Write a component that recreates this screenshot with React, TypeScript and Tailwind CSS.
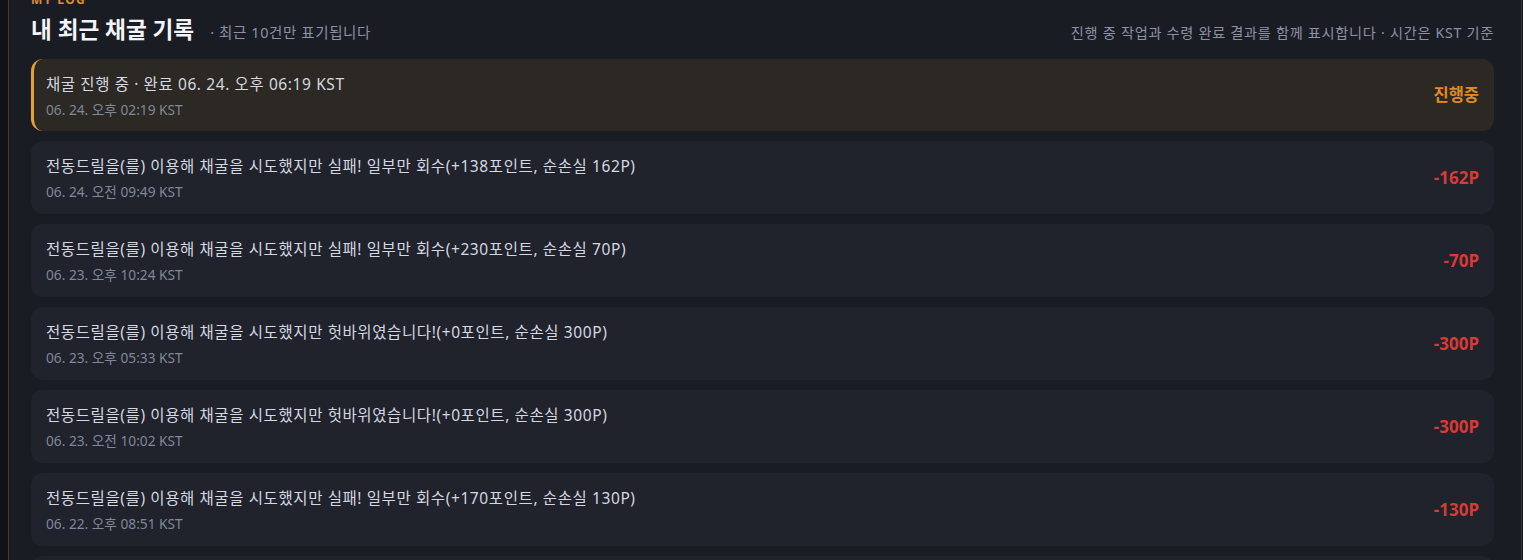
import React from "react"

type Log = {
  text: string
  time: string
  amount: string
  pending?: boolean
}

const logs: Log[] = [
  { text: "채굴 진행 중 · 완료 06. 24. 오후 06:19 KST", time: "06. 24. 오후 02:19 KST", amount: "진행중", pending: true },
  { text: "전동드릴을(를) 이용해 채굴을 시도했지만 실패! 일부만 회수(+138포인트, 순손실 162P)", time: "06. 24. 오전 09:49 KST", amount: "-162P" },
  { text: "전동드릴을(를) 이용해 채굴을 시도했지만 실패! 일부만 회수(+230포인트, 순손실 70P)", time: "06. 23. 오후 10:24 KST", amount: "-70P" },
  { text: "전동드릴을(를) 이용해 채굴을 시도했지만 헛바위였습니다!(+0포인트, 순손실 300P)", time: "06. 23. 오후 05:33 KST", amount: "-300P" },
  { text: "전동드릴을(를) 이용해 채굴을 시도했지만 헛바위였습니다!(+0포인트, 순손실 300P)", time: "06. 23. 오전 10:02 KST", amount: "-300P" },
  { text: "전동드릴을(를) 이용해 채굴을 시도했지만 실패! 일부만 회수(+170포인트, 순손실 130P)", time: "06. 22. 오후 08:51 KST", amount: "-130P" },
  { text: "전동드릴을(를) 이용해 채굴을 시도했지만 헛바위였습니다!(+0포인트, 순손실 300P)", time: "06. 22. 오후 03:12 KST", amount: "-300P" },
]

export default function App() {
  return (
    <div
      className="min-h-screen overflow-hidden bg-[#111217]"
      style={{ fontFamily: '"Noto Sans", "Noto Sans CJK KR", sans-serif' }}
    >
      <div className="ml-[8px] w-[1514px] border-l border-r border-l-[#4a3a24] border-r-[#353842] bg-[#1a1c24] pl-[22px] pr-[27px] pb-6">
        {/* header */}
        <div className="-mt-[8px] text-[12px] font-bold leading-4 tracking-[0.12em] text-[#e08a2a]">MY LOG</div>
        <div className="mt-[8px] flex items-baseline justify-between">
          <div className="flex items-baseline gap-4">
            <h2 className="text-[22.6px] font-bold leading-7 text-[#f2f4f7]">내 최근 채굴 기록</h2>
            <span className="text-[14.5px] tracking-[0.6px] text-[#8b93a3]">· 최근 10건만 표기됩니다</span>
          </div>
          <span className="text-[14.2px] tracking-[0.7px] text-[#8b93a3]">진행 중 작업과 수령 완료 결과를 함께 표시합니다 · 시간은 KST 기준</span>
        </div>

        {/* log list */}
        <div className="mt-[15px] flex flex-col gap-[10px]">
          {logs.map((log, idx) => (
            <div
              key={idx}
              className={
                log.pending
                  ? "flex h-[72px] items-center justify-between rounded-xl border-l-[3px] border-[#e3a233] bg-[#2c2823] pl-[12px] pr-[15px]"
                  : "flex h-[73px] items-center justify-between rounded-xl bg-[#20222c] pl-[15px] pr-[15px]"
              }
            >
              <div className="flex flex-col gap-[6px] pt-[1px]">
                <p className="text-[15.5px] leading-[22px] tracking-[0.6px] text-[#d4d8e0]">{log.text}</p>
                <p className="text-[13.7px] leading-[18px] text-[#7f899a]">{log.time}</p>
              </div>
              <span
                className={
                  log.pending
                    ? "text-[16.5px] font-bold text-[#e08a2a]"
                    : "text-[17px] font-bold text-[#d63b35]"
                }
              >
                {log.amount}
              </span>
            </div>
          ))}
        </div>
      </div>
    </div>
  )
}
